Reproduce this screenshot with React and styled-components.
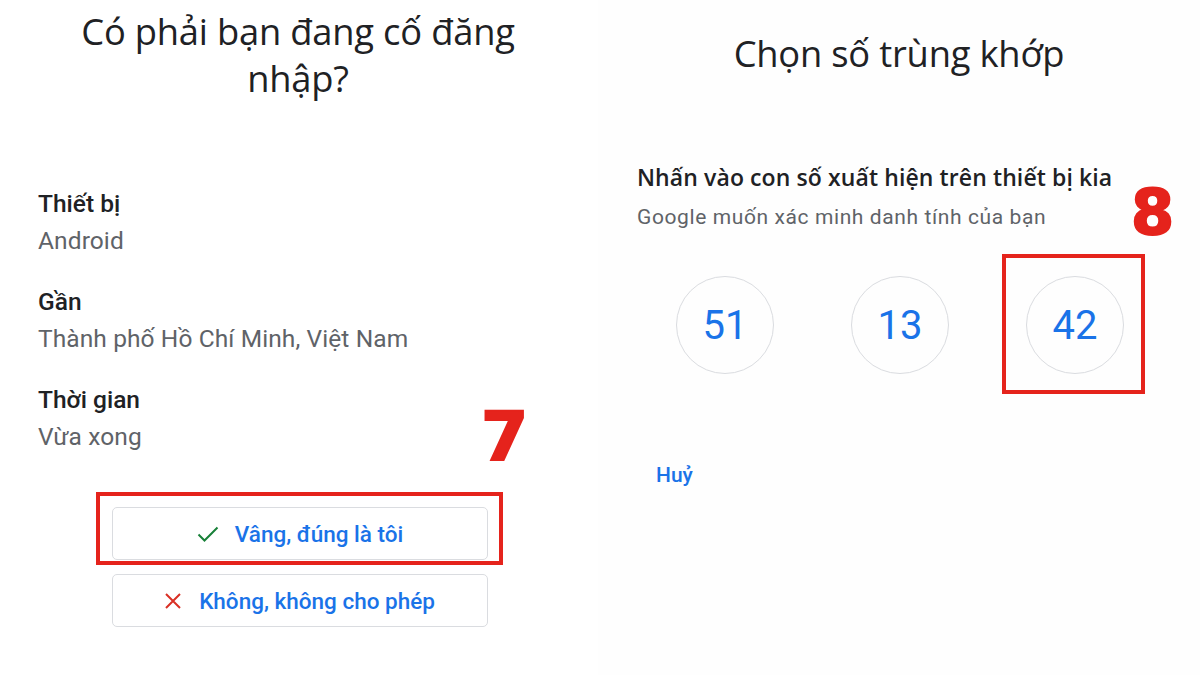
import React from "react";
import styled, { createGlobalStyle } from "styled-components";

const GlobalStyle = createGlobalStyle`
  html, body {
    margin: 0;
    padding: 0;
    background: #ffffff;
  }
  body {
    font-family: Roboto, "Noto Sans", sans-serif;
    color: #202124;
  }
`;

const Page = styled.div`
  width: 1200px;
  height: 675px;
  display: grid;
  grid-template-columns: 598px 602px;
  overflow: hidden;
`;

const Panel = styled.section`
  position: relative;
  display: flex;
  flex-direction: column;
  align-items: flex-start;
  padding: ${({ $pad }) => $pad};
  background: ${({ $bg }) => $bg || "#ffffff"};
`;

const Title = styled.h1`
  align-self: stretch;
  margin: 0;
  margin-right: ${({ $mr }) => $mr || "0"};
  font-family: "Open Sans", sans-serif;
  font-weight: 400;
  font-size: 36.3px;
  line-height: 47px;
  text-align: center;
  color: #202124;
  letter-spacing: -0.2px;
`;

const Details = styled.div`
  display: flex;
  flex-direction: column;
  gap: 35px;
  margin-top: 89px;
`;

const Field = styled.div`
  display: flex;
  flex-direction: column;
  gap: 11px;
`;

const Label = styled.div`
  font-size: 24.5px;
  line-height: 26px;
  font-weight: 500;
  color: #202124;
`;

const Value = styled.div`
  font-size: 24.5px;
  line-height: 26px;
  color: #5f6368;
  letter-spacing: 0.1px;
`;

const Actions = styled.div`
  display: flex;
  flex-direction: column;
  gap: 14px;
  margin: 57px 0 0 74px;
  width: 376px;
`;

const Highlight = styled.div`
  position: relative;
`;

const Mark = styled.div`
  position: absolute;
  border: 4px solid #e5231c;
  pointer-events: none;
  top: ${({ $t }) => $t};
  left: ${({ $l }) => $l};
  width: ${({ $w }) => $w};
  height: ${({ $h }) => $h};
  box-sizing: border-box;
`;

const StepNumber = styled.div`
  position: absolute;
  top: ${({ $t }) => $t};
  left: ${({ $l }) => $l};
  font-family: "DejaVu Sans", "Liberation Sans", sans-serif;
  font-weight: 700;
  font-size: ${({ $size }) => $size};
  line-height: 1;
  color: #e5231c;
  -webkit-text-stroke: 2px #e5231c;
`;

const Button = styled.button`
  display: flex;
  align-items: center;
  justify-content: center;
  gap: ${({ $gap }) => $gap};
  width: 100%;
  height: 53px;
  padding: 0;
  background: #ffffff;
  border: 1px solid #dadce0;
  border-radius: 5px;
  font-family: Roboto, sans-serif;
  font-size: 22.5px;
  font-weight: 500;
  color: #1a73e8;
  cursor: pointer;
  svg {
    flex: none;
  }
`;

const Heading = styled.div`
  font-family: "Open Sans", sans-serif;
  font-size: 23px;
  line-height: 28px;
  font-weight: 600;
  letter-spacing: 0.1px;
  color: #202124;
  margin-top: 86px;
`;

const Sub = styled.div`
  font-size: 21px;
  line-height: 24px;
  color: #5f6368;
  letter-spacing: 0.6px;
  margin-top: 14px;
`;

const Choices = styled.div`
  display: flex;
  justify-content: space-between;
  width: 448px;
  margin: 47px 0 0 39px;
`;

const Choice = styled.div`
  box-sizing: border-box;
  width: 98px;
  height: 98px;
  border: 1.5px solid #dadce0;
  border-radius: 50%;
  display: flex;
  align-items: center;
  justify-content: center;
  font-size: 40px;
  color: #1a73e8;
`;

const Cancel = styled.a`
  margin: 89px 0 0 19px;
  font-size: 21px;
  line-height: 24px;
  font-weight: 500;
  color: #1a73e8;
  text-decoration: none;
`;

const Check = () => (
  <svg width="22" height="16" viewBox="0 0 22 16" fill="none">
    <path d="M1.5 8.5l6 6L20.5 1.5" stroke="#188038" strokeWidth="2" />
  </svg>
);

const Cross = () => (
  <svg width="16" height="16" viewBox="0 0 16 16" fill="none">
    <path d="M1 1l14 14M15 1L1 15" stroke="#d93025" strokeWidth="2" />
  </svg>
);

export default function App() {
  return (
    <Page>
      <GlobalStyle />
      <Panel $pad="8px 40px 0 38px">
        <Title>Có phải bạn đang cố đăng nhập?</Title>
        <Details>
          <Field>
            <Label>Thiết bị</Label>
            <Value>Android</Value>
          </Field>
          <Field>
            <Label>Gần</Label>
            <Value>Thành phố Hồ Chí Minh, Việt Nam</Value>
          </Field>
          <Field>
            <Label>Thời gian</Label>
            <Value>Vừa xong</Value>
          </Field>
        </Details>
        <Actions>
          <Highlight>
            <Button $gap="16px">
              <Check />
              Vâng, đúng là tôi
            </Button>
            <Mark $t="-15px" $l="-16px" $w="407px" $h="73px" />
            <StepNumber $t="-104px" $l="369px" $size="68px">
              7
            </StepNumber>
          </Highlight>
          <Button $gap="18px">
            <Cross />
            Không, không cho phép
          </Button>
        </Actions>
      </Panel>
      <Panel $pad="30px 0 0 39px" $bg="#fefefe">
        <Title $mr="39px">Chọn số trùng khớp</Title>
        <Heading>Nhấn vào con số xuất hiện trên thiết bị kia</Heading>
        <Sub>Google muốn xác minh danh tính của bạn</Sub>
        <Choices>
          <Choice>51</Choice>
          <Choice>13</Choice>
          <Highlight>
            <Choice>42</Choice>
            <Mark $t="-22px" $l="-24px" $w="143px" $h="140px" />
          </Highlight>
        </Choices>
        <StepNumber $t="182px" $l="533px" $size="62px">
          8
        </StepNumber>
        <Cancel href="#">Huỷ</Cancel>
      </Panel>
    </Page>
  );
}
